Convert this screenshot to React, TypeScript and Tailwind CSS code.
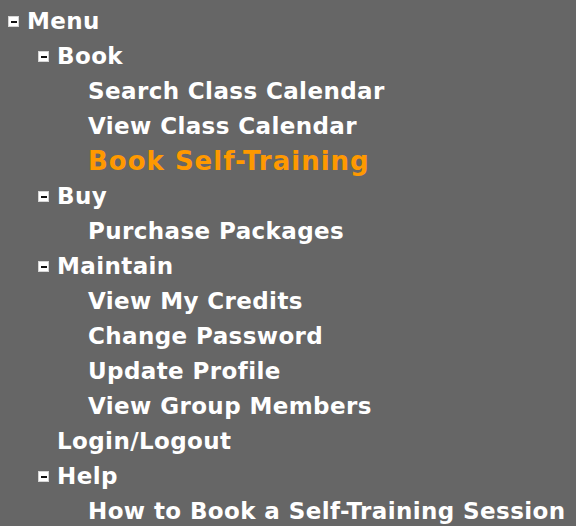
const Toggle = () => (
  <span className="mr-[8px] flex h-[11px] w-[11px] shrink-0 items-center justify-center border border-[#d4d4d4] bg-white">
    <span className="h-[2px] w-[6px] bg-[#111]" />
  </span>
);

type Item = { label: string; active?: boolean };
type Group = { label: string; children?: Item[] };

const groups: Group[] = [
  {
    label: "Book",
    children: [
      { label: "Search Class Calendar" },
      { label: "View Class Calendar" },
      { label: "Book Self-Training", active: true },
    ],
  },
  { label: "Buy", children: [{ label: "Purchase Packages" }] },
  {
    label: "Maintain",
    children: [
      { label: "View My Credits" },
      { label: "Change Password" },
      { label: "Update Profile" },
      { label: "View Group Members" },
    ],
  },
  { label: "Login/Logout" },
  { label: "Help", children: [{ label: "How to Book a Self-Training Session" }] },
];

const Row = ({ children, className = "" }: { children: React.ReactNode; className?: string }) => (
  <div className={`flex h-[35px] items-center whitespace-nowrap ${className}`}>{children}</div>
);

export default function App() {
  return (
    <div
      className="h-[526px] w-[576px] overflow-hidden bg-[#666666] pl-[8px] pt-[4px] text-[23px] font-bold tracking-[0.4px] text-white"
      style={{ fontFamily: '"DejaVu Sans", Verdana, sans-serif' }}
    >
      <Row>
        <Toggle />
        <span>Menu</span>
      </Row>
      <div className="pl-[30px]">
        {groups.map((g) => (
          <div key={g.label}>
            <Row className={g.children ? "" : "pl-[19px]"}>
              {g.children && <Toggle />}
              <span>{g.label}</span>
            </Row>
            {g.children?.map((c) => (
              <Row key={c.label} className="pl-[50px]">
                <a
                  href="#"
                  className={c.active ? "text-[26px] tracking-[1px] text-[#ff9900]" : "text-white"}
                >
                  {c.label}
                </a>
              </Row>
            ))}
          </div>
        ))}
      </div>
    </div>
  );
}
